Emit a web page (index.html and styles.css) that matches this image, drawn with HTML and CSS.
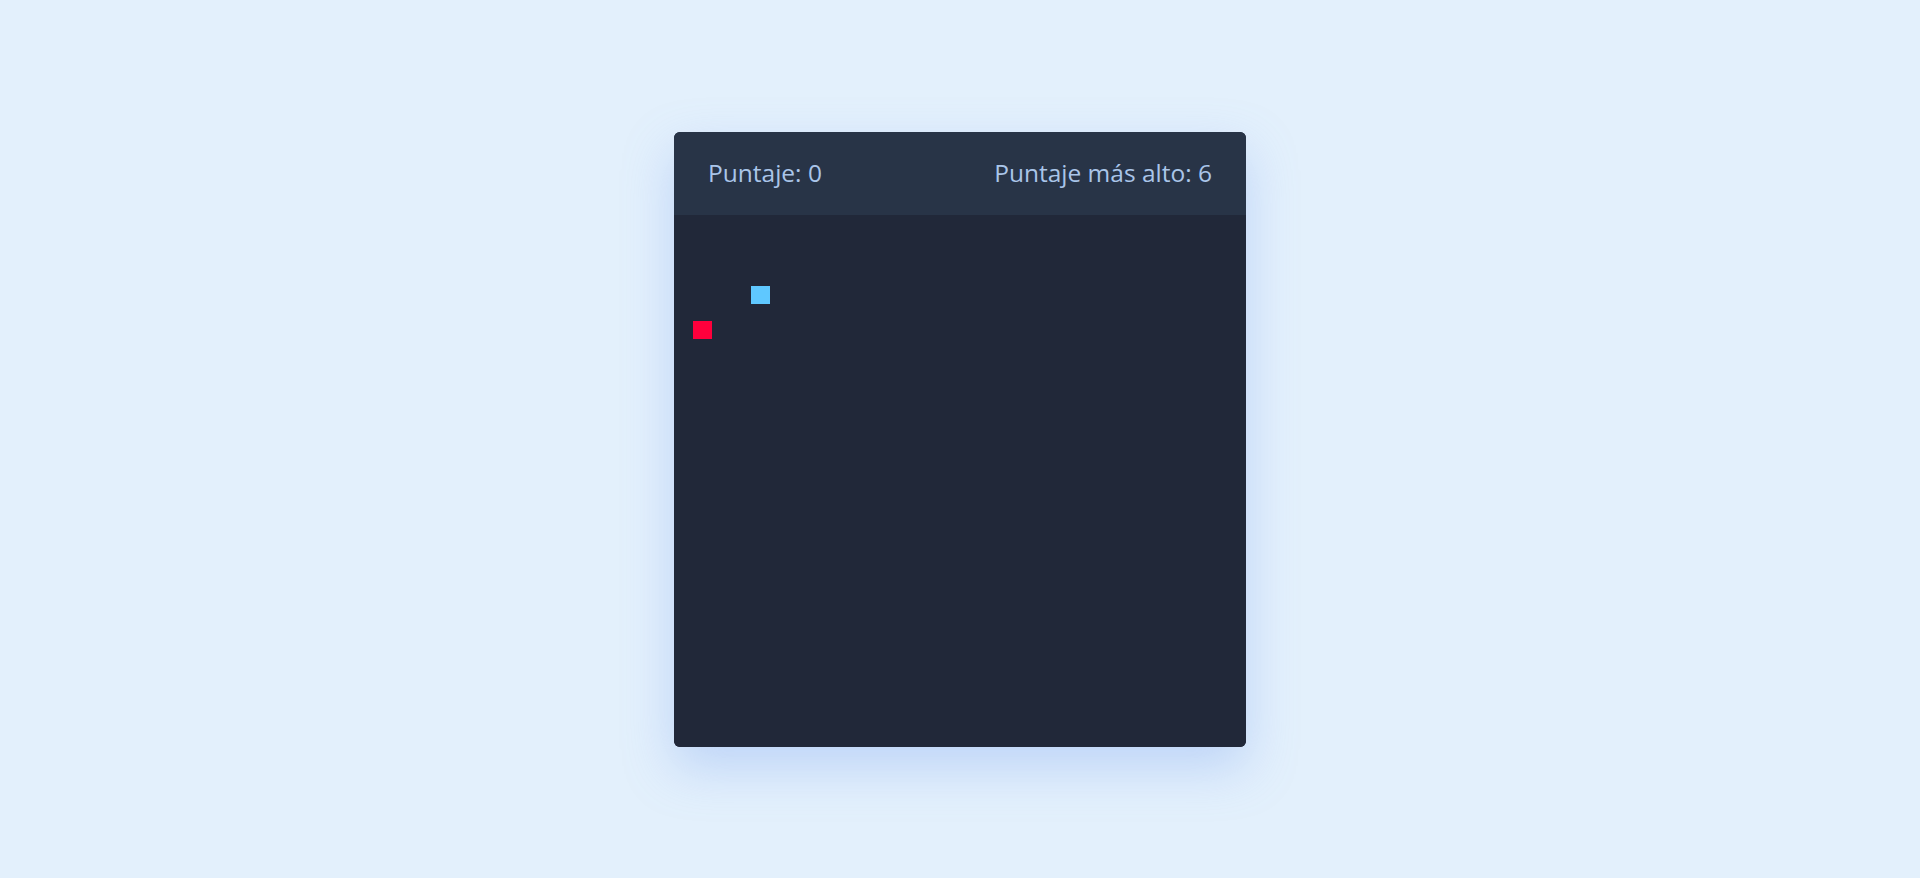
FILE: index.html
```html
<!DOCTYPE html>
<html lang="es">
<head>
<meta charset="utf-8">
<title>Snake</title>
<link rel="stylesheet" href="styles.css">
</head>
<body>
<main class="game">
  <header class="scorebar">
    <span class="score">Puntaje: 0</span>
    <span class="score">Puntaje más alto: 6</span>
  </header>
  <div class="board">
    <div class="cell food"></div>
    <div class="cell snake"></div>
  </div>
</main>
</body>
</html>
```
FILE: styles.css
```css
html, body {
  margin: 0;
  padding: 0;
}
body {
  min-height: 100vh;
  background: #e3f0fc;
  display: flex;
  align-items: center;
  justify-content: center;
  font-family: "Open Sans", "Noto Sans", sans-serif;
}
.game {
  width: 572px;
  border-radius: 6px;
  overflow: hidden;
  background: #212839;
  box-shadow: 0 20px 50px rgba(120, 160, 240, 0.35);
}
.scorebar {
  height: 83px;
  box-sizing: border-box;
  padding: 0 34px 0 34px;
  display: flex;
  align-items: center;
  justify-content: space-between;
  background: #283447;
}
.score {
  color: #aac5e9;
  font-size: 24.5px;
  line-height: 1;
}
.board {
  position: relative;
  height: 532px;
  background: #212839;
}
.cell {
  position: absolute;
  width: 19px;
  height: 18px;
}
.food {
  left: 19px;
  top: 106px;
  background: #ff003c;
}
.snake {
  left: 77px;
  top: 71px;
  background: #5fc8ff;
}
```
